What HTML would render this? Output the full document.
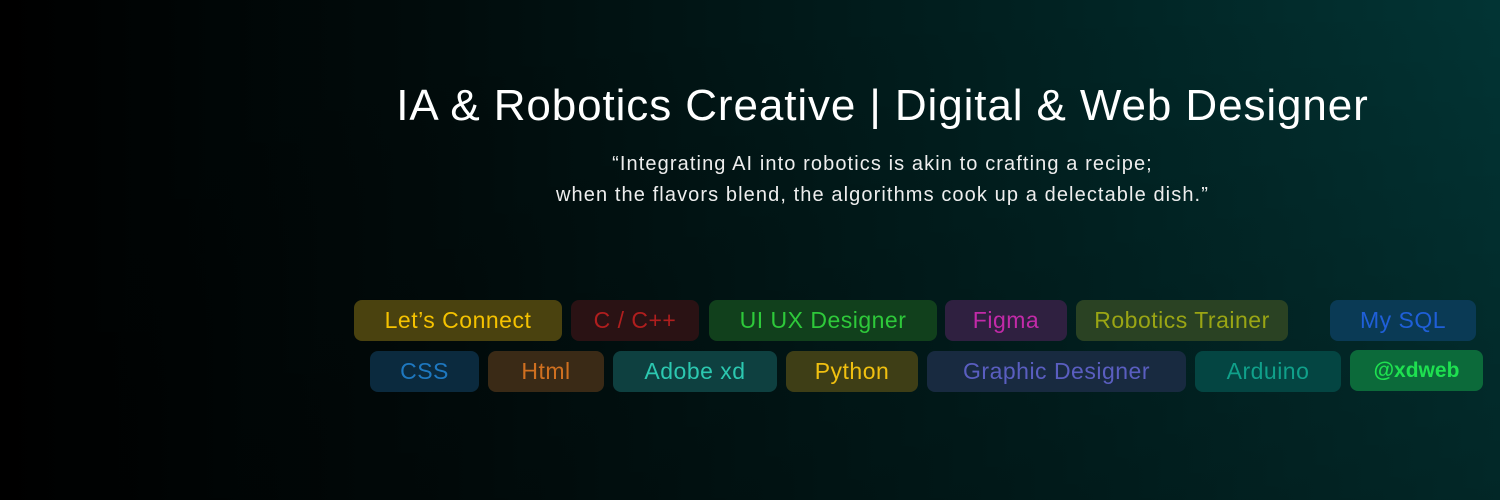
<!DOCTYPE html>
<html><head><meta charset="utf-8"><style>
html,body{margin:0;padding:0}
body{width:1500px;height:500px;overflow:hidden;position:relative;font-family:"Liberation Sans",sans-serif;
background:linear-gradient(90deg,#000 0%,#010c0c 30%,#012222 70%,#023434 100%);}
.ov{position:absolute;inset:0;background:linear-gradient(180deg,rgba(0,0,0,0) 0%,rgba(0,0,0,0.25) 100%)}
h1{position:absolute;left:0;width:1765px;top:81px;margin:0;text-align:center;color:#fff;font-weight:normal;font-size:44px;letter-spacing:0.9px}
.q{position:absolute;left:0;width:1765px;top:149px;text-align:center;color:#eee;font-size:20px;line-height:31px;letter-spacing:1.1px}
.t{position:absolute;height:41px;border-radius:8px;display:flex;align-items:center;justify-content:center;font-size:23px;letter-spacing:0.5px}
</style></head><body><div class="ov"></div>
<h1>IA &amp; Robotics Creative | Digital &amp; Web Designer</h1>
<div class="q">“Integrating AI into robotics is akin to crafting a recipe;<br>when the flavors blend, the algorithms cook up a delectable dish.”</div>
<div class="t" style="left:354px;top:300px;width:208px;background:#4a420f;color:#f5c200">Let’s Connect</div>
<div class="t" style="left:571px;top:300px;width:128px;background:#2a1214;color:#b01e1e">C / C++</div>
<div class="t" style="left:709px;top:300px;width:228px;background:#11401c;color:#2ec93a">UI UX Designer</div>
<div class="t" style="left:945px;top:300px;width:122px;background:#2f2040;color:#c22aa8">Figma</div>
<div class="t" style="left:1076px;top:300px;width:212px;background:#2a4223;color:#9aa514">Robotics Trainer</div>
<div class="t" style="left:1330px;top:300px;width:146px;background:#0a3a55;color:#1f5fd8">My SQL</div>
<div class="t" style="left:370px;top:351px;width:109px;background:#0b2a3e;color:#1e78c0">CSS</div>
<div class="t" style="left:488px;top:351px;width:116px;background:#3a2a16;color:#d07020">Html</div>
<div class="t" style="left:613px;top:351px;width:164px;background:#0e4040;color:#2cc8b0">Adobe xd</div>
<div class="t" style="left:786px;top:351px;width:132px;background:#3e3e16;color:#f0c010">Python</div>
<div class="t" style="left:927px;top:351px;width:259px;background:#182a40;color:#5a5ec0">Graphic Designer</div>
<div class="t" style="left:1195px;top:351px;width:146px;background:#044542;color:#10a08a">Arduino</div>
<div class="t" style="left:1350px;top:350px;width:133px;background:#0c6a3a;color:#1ee050;font-weight:bold;font-size:21px;letter-spacing:0">@xdweb</div>
</body></html>
